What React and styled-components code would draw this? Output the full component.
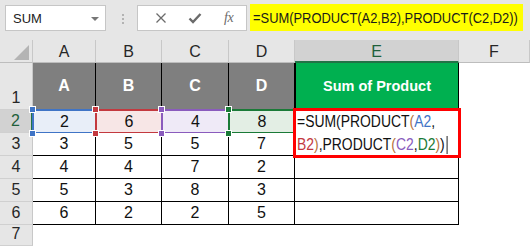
import React from 'react';
import styled, { createGlobalStyle } from 'styled-components';

const GlobalStyle = createGlobalStyle`
    body {
        margin: 0;
        background: #fff;
        font-family: "Liberation Sans", Arial, sans-serif;
    }
`;

const CELL_FONT = `"Liberation Sans", Arial, sans-serif`;

const BLUE = '#3f74c6';
const RED = '#c3393f';
const PURPLE = '#8a5bbd';
const GREEN = '#1a7a37';
const PAREN = '#b5703a';

const Toolbar = styled.div`
    display: flex;
    align-items: flex-start;
    height: 40px;
    box-sizing: border-box;
    padding: 5px 0 0 5px;
    background: #e6e6e6;
`;

const NameBox = styled.div`
    width: 101px;
    height: 26px;
    box-sizing: border-box;
    border: 1px solid #c6c6c6;
    background: #fff;
    display: flex;
    align-items: center;
    justify-content: space-between;
    padding: 0 6px 0 7px;
    font-size: 13px;
    color: #222;
`;

const DropArrow = styled.span`
    width: 0;
    height: 0;
    border-left: 4px solid transparent;
    border-right: 4px solid transparent;
    border-top: 4px solid #777;
    margin-top: 1px;
`;

const Dots = styled.div`
    display: flex;
    flex-direction: column;
    gap: 2px;
    margin: 9px 0 0 16px;
    span {
        width: 2px;
        height: 2px;
        background: #b3b3b3;
    }
`;

const FxBox = styled.div`
    width: 110px;
    height: 26px;
    margin-left: 13px;
    box-sizing: border-box;
    border: 1px solid #c6c6c6;
    background: #fff;
    display: flex;
    align-items: center;
    justify-content: space-around;
    padding: 0 2px 0 6px;
`;

const FxLabel = styled.span`
    font-family: "Liberation Serif", "Times New Roman", serif;
    font-style: italic;
    font-size: 14px;
    color: #6b6b6b;
    letter-spacing: -0.5px;
`;

const FormulaInput = styled.div`
    width: 273px;
    height: 27px;
    margin: -1px 0 0 3px;
    box-sizing: border-box;
    background: #ffff00;
    display: flex;
    align-items: center;
    padding-left: 3px;
    overflow: hidden;
    font-size: 15px;
    color: #1a1a1a;
    white-space: nowrap;
`;

const Narrow = styled.span`
    display: inline-block;
    flex: none;
    white-space: nowrap;
    transform: scaleX(${({ $k }) => $k});
    transform-origin: left center;
`;

const Sheet = styled.div`
    display: grid;
    grid-template-columns: 33px 63px 66px 67px 66px 164px 1fr;
    grid-template-rows: 23px 47px repeat(5, 23px) 21px;
    font-family: ${CELL_FONT};
    font-size: 16px;
`;

const Corner = styled.div`
    background: #e6e6e6;
    border-right: 1px solid #c8c8c8;
    border-bottom: 1px solid #bdbdbd;
    display: flex;
    align-items: flex-end;
    justify-content: flex-end;
    padding: 0 3px 2px 0;
`;

const ColHeader = styled.div`
    background: ${({ $active }) => ($active ? '#d2d2d2' : '#e6e6e6')};
    border-right: 1px solid #c8c8c8;
    border-bottom: ${({ $active }) => ($active ? '2px solid #217346' : '1px solid #bdbdbd')};
    color: ${({ $active }) => ($active ? '#1f5f3a' : '#262626')};
    display: flex;
    align-items: center;
    justify-content: center;
    padding-top: 2px;
`;

const RowHeader = styled.div`
    background: ${({ $active }) => ($active ? '#d2d2d2' : '#e6e6e6')};
    border-right: ${({ $active }) => ($active ? '2px solid #217346' : '1px solid #c8c8c8')};
    border-bottom: 1px solid #d0d0d0;
    color: ${({ $active }) => ($active ? '#1f5f3a' : '#262626')};
    display: flex;
    align-items: flex-end;
    justify-content: center;
    padding-bottom: 2px;
`;

const Cell = styled.div`
    position: relative;
    display: flex;
    align-items: center;
    justify-content: center;
    background: ${({ $fill }) => $fill || '#fff'};
    border-right: ${({ $lined }) => ($lined ? '1px solid #000' : 'none')};
    border-bottom: ${({ $lined }) => ($lined ? '1px solid #000' : 'none')};
    color: #111;
`;

const HeadCell = styled(Cell)`
    background: ${({ $green }) => ($green ? '#00b050' : '#7f7f7f')};
    color: #fff;
    font-weight: bold;
    font-size: ${({ $green }) => ($green ? '14.5px' : '16px')};
    border-left: ${({ $green }) => ($green ? '1px solid #000' : 'none')};
`;

const Range = styled.div`
    position: absolute;
    top: -1px;
    left: -1px;
    right: -1px;
    bottom: -1px;
    border: 2px solid ${({ $color }) => $color};
`;

const Handle = styled.span`
    position: absolute;
    width: 5px;
    height: 5px;
    background: ${({ $color }) => $color};
    border: 1px solid #fff;
    ${({ $top }) => ($top ? 'top: -5px;' : 'bottom: -5px;')}
    left: -5px;
    z-index: 2;
`;

const CellValue = styled.span`
    position: relative;
    z-index: 1;
`;

const EditCell = styled.div`
    grid-row: span 2;
    position: relative;
    background: #fff;
    border-right: 1px solid #000;
    border-bottom: 1px solid #000;
    outline: 3px solid #ff0000;
    outline-offset: -1px;
    padding: 0 0 0 2px;
    line-height: 23px;
    color: #111;
    z-index: 3;
`;

const Ref = styled.span`
    color: ${({ $c }) => $c};
`;

const Caret = styled.span`
    display: inline-block;
    width: 1px;
    height: 18px;
    background: #000;
    vertical-align: -4px;
    margin-left: 2px;
`;

const rows = [
    [2, 6, 4, 8],
    [3, 5, 5, 7],
    [4, 4, 7, 2],
    [5, 3, 8, 3],
    [6, 2, 2, 5],
];

const selection = [
    { color: BLUE, fill: '#e8eef8' },
    { color: RED, fill: '#f7e6e6' },
    { color: PURPLE, fill: '#efeaf7' },
    { color: GREEN, fill: '#e3eee4' },
];

const Selected = ({ value, color, fill }) => (
    <Cell $fill={fill}>
        <Range $color={color}>
            <Handle $color={color} $top />
            <Handle $color={color} />
        </Range>
        <CellValue>{value}</CellValue>
    </Cell>
);

const App = () => {
    return (
        <>
            <GlobalStyle />
            <Toolbar>
                <NameBox>
                    SUM
                    <DropArrow />
                </NameBox>
                <Dots>
                    <span />
                    <span />
                    <span />
                </Dots>
                <FxBox>
                    <svg width="12" height="12" viewBox="0 0 12 12">
                        <path d="M1.5 1.5 L10.5 10.5 M10.5 1.5 L1.5 10.5" stroke="#6b6b6b" strokeWidth="1.3" />
                    </svg>
                    <svg width="14" height="12" viewBox="0 0 14 12">
                        <path d="M1.5 6.5 L5 10 L12.5 2" stroke="#6b6b6b" strokeWidth="2.4" fill="none" />
                    </svg>
                    <FxLabel>fx</FxLabel>
                </FxBox>
                <FormulaInput>
                    <Narrow $k={0.86}>=SUM(PRODUCT(A2,B2),PRODUCT(C2,D2))</Narrow>
                </FormulaInput>
            </Toolbar>

            <Sheet>
                <Corner>
                    <svg width="15" height="15" viewBox="0 0 15 15">
                        <path d="M15 0 L15 15 L0 15 Z" fill="#b4b4b4" />
                    </svg>
                </Corner>
                {['A', 'B', 'C', 'D', 'E', 'F'].map((c) => (
                    <ColHeader key={c} $active={c === 'E'}>{c}</ColHeader>
                ))}

                <RowHeader>1</RowHeader>
                {['A', 'B', 'C', 'D'].map((c) => (
                    <HeadCell key={c} $lined>{c}</HeadCell>
                ))}
                <HeadCell $lined $green>Sum of Product</HeadCell>
                <Cell />

                {rows.map((r, i) => (
                    <React.Fragment key={i}>
                        <RowHeader $active={i === 0}>{i + 2}</RowHeader>
                        {i === 0
                            ? r.map((v, j) => <Selected key={j} value={v} {...selection[j]} />)
                            : r.map((v, j) => (
                                  <Cell key={j} $lined>{v}</Cell>
                              ))}
                        {i === 0 && (
                            <EditCell>
                                <Narrow $k={0.87}>
                                    =SUM(PRODUCT<Ref $c={PAREN}>(</Ref>
                                    <Ref $c={BLUE}>A2</Ref>,
                                    <br />
                                    <Ref $c={RED}>B2</Ref>
                                    <Ref $c={PAREN}>)</Ref>,PRODUCT<Ref $c={PAREN}>(</Ref>
                                    <Ref $c={PURPLE}>C2</Ref>,<Ref $c={GREEN}>D2</Ref>
                                    <Ref $c={PAREN}>)</Ref>)
                                    <Caret />
                                </Narrow>
                            </EditCell>
                        )}
                        {i > 1 && <Cell $lined />}
                        <Cell />
                    </React.Fragment>
                ))}

                <RowHeader>7</RowHeader>
                {[0, 1, 2, 3, 4, 5].map((k) => (
                    <Cell key={k} />
                ))}
            </Sheet>
        </>
    );
};

export default App;
